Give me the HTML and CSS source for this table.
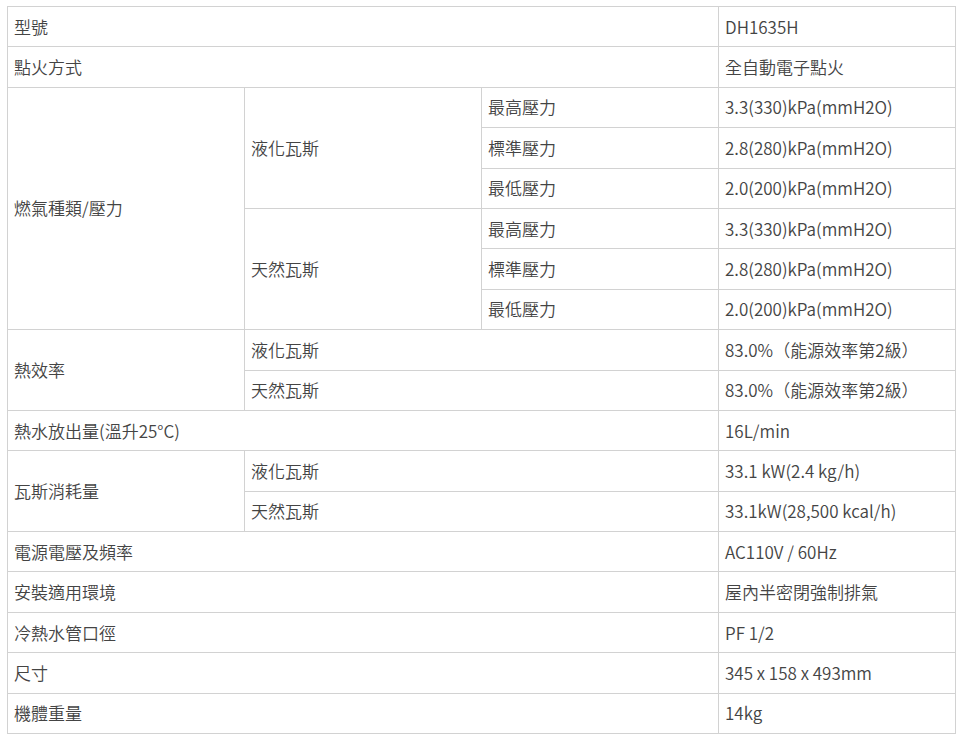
FILE: index.html
```html
<!DOCTYPE html>
<html lang="zh-Hant">
<head>
<meta charset="utf-8">
<link rel="stylesheet" href="styles.css">
</head>
<body>
<table class="spec">
  <colgroup><col class="c"><col class="c"><col class="c"><col class="c"></colgroup>
  <tbody>
    <tr><td colspan="3">型號</td><td>DH1635H</td></tr>
    <tr><td colspan="3">點火方式</td><td>全自動電子點火</td></tr>
    <tr><td rowspan="6">燃氣種類/壓力</td><td rowspan="3">液化瓦斯</td><td>最高壓力</td><td>3.3(330)kPa(mmH2O)</td></tr>
    <tr><td>標準壓力</td><td>2.8(280)kPa(mmH2O)</td></tr>
    <tr><td>最低壓力</td><td>2.0(200)kPa(mmH2O)</td></tr>
    <tr><td rowspan="3">天然瓦斯</td><td>最高壓力</td><td>3.3(330)kPa(mmH2O)</td></tr>
    <tr><td>標準壓力</td><td>2.8(280)kPa(mmH2O)</td></tr>
    <tr><td>最低壓力</td><td>2.0(200)kPa(mmH2O)</td></tr>
    <tr><td rowspan="2">熱效率</td><td colspan="2">液化瓦斯</td><td>83.0%（能源效率第2級）</td></tr>
    <tr><td colspan="2">天然瓦斯</td><td>83.0%（能源效率第2級）</td></tr>
    <tr><td colspan="3">熱水放出量(溫升25°C)</td><td>16L/min</td></tr>
    <tr><td rowspan="2">瓦斯消耗量</td><td colspan="2">液化瓦斯</td><td>33.1 kW(2.4 kg/h)</td></tr>
    <tr><td colspan="2">天然瓦斯</td><td>33.1kW(28,500 kcal/h)</td></tr>
    <tr><td colspan="3">電源電壓及頻率</td><td>AC110V / 60Hz</td></tr>
    <tr><td colspan="3">安裝適用環境</td><td>屋內半密閉強制排氣</td></tr>
    <tr><td colspan="3">冷熱水管口徑</td><td>PF 1/2</td></tr>
    <tr><td colspan="3">尺寸</td><td>345 x 158 x 493mm</td></tr>
    <tr><td colspan="3">機體重量</td><td>14kg</td></tr>
  </tbody>
</table>
</body>
</html>
```

FILE: styles.css
```css
html, body {
  background: #fff;
}
body {
  margin: 6px 0 0 7px;
  font-family: "Noto Sans CJK TC DemiLight", "Noto Sans CJK TC", "Noto Sans", sans-serif;
  font-size: 17px;
  font-weight: 350;
  color: #444;
}
.spec {
  border-collapse: collapse;
  table-layout: fixed;
  width: 949px;
}
.spec .c {
  width: 237px;
}
.spec tr {
  height: 40.4px;
}
.spec td {
  border: 1px solid #d2d2d2;
  padding: 0 6px;
  vertical-align: middle;
  line-height: 22px;
  white-space: nowrap;
}
```
